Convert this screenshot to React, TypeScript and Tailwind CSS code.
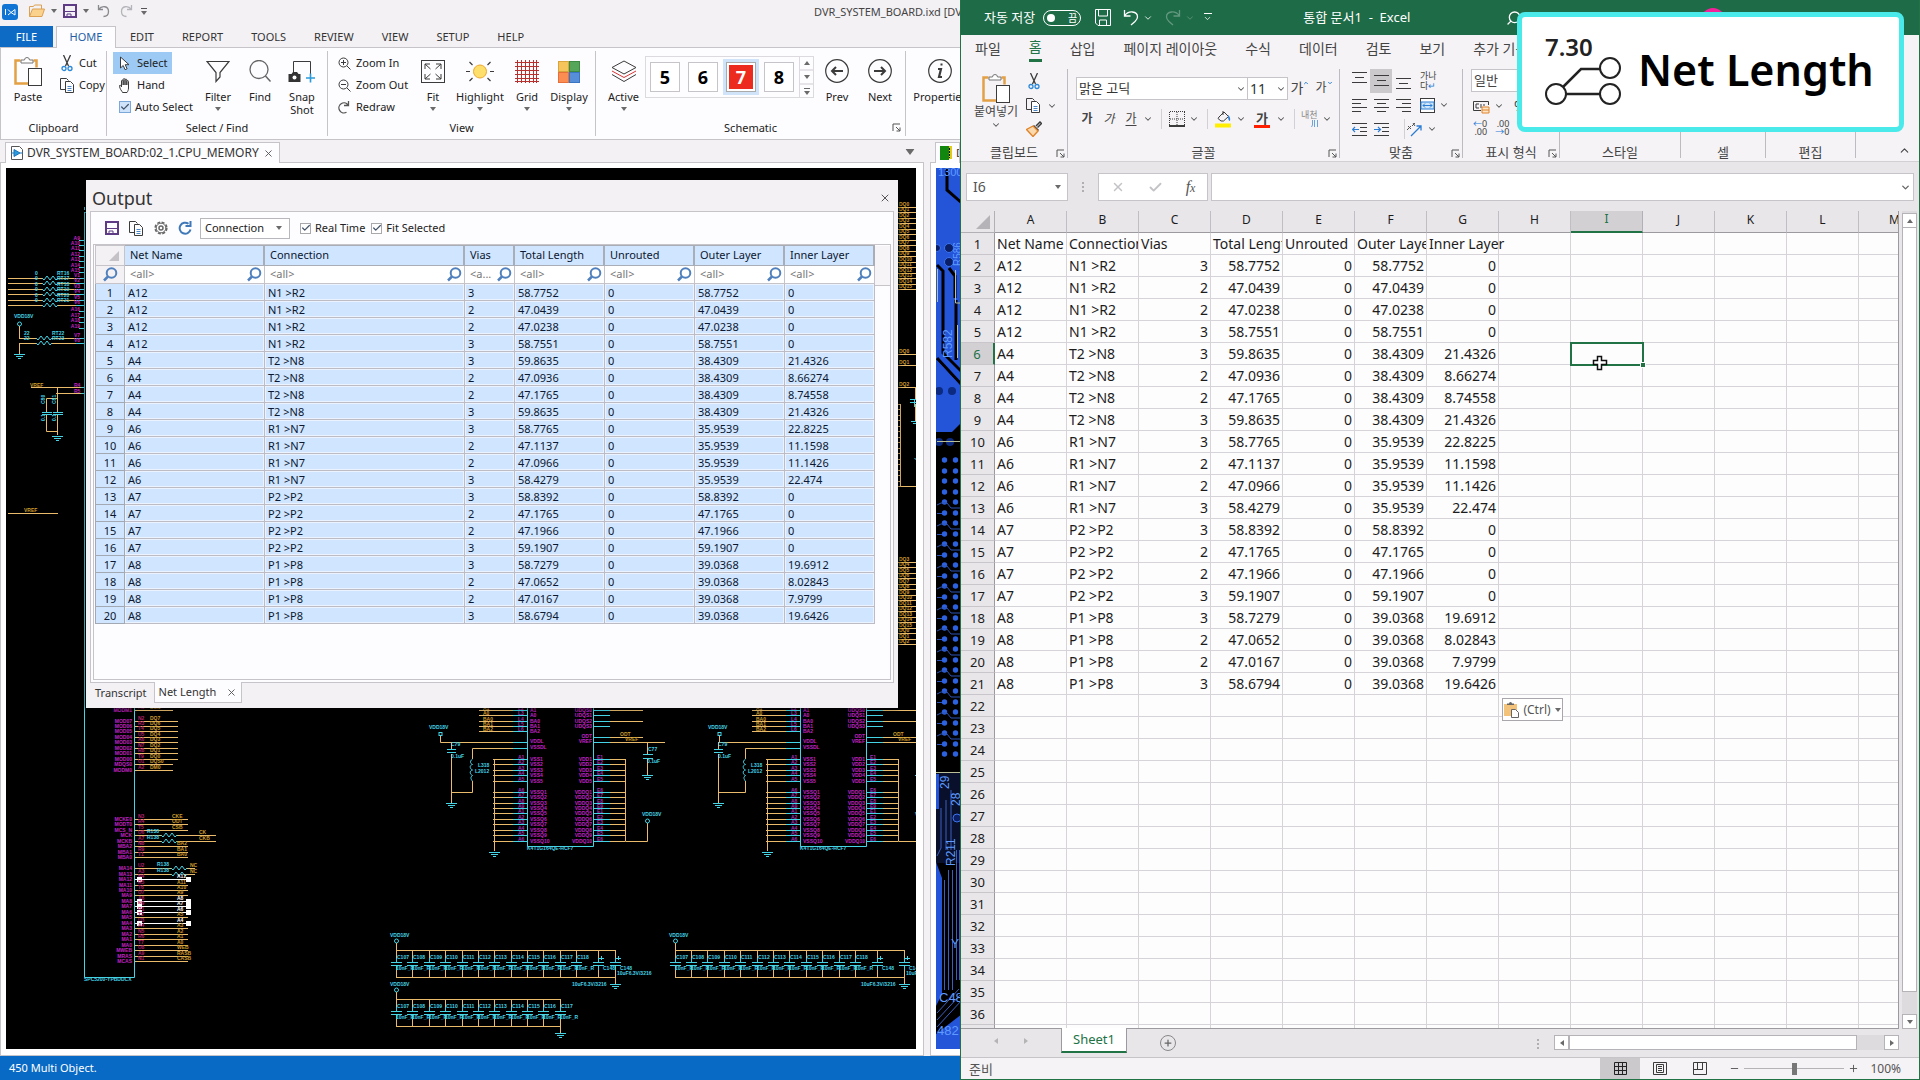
import type { ReactNode } from "react";
import { Check, ChevronDown, ChevronUp, Plus, Minus, Search, X } from "lucide-react";

type Row = [string, string, number, string, string, string, string];

const columns = ["Net Name", "Connection", "Vias", "Total Length", "Unrouted", "Outer Layer", "Inner Layer"];

const rows: Row[] = [
	["A12", "N1 >R2", 3, "58.7752", "0", "58.7752", "0"],
	["A12", "N1 >R2", 2, "47.0439", "0", "47.0439", "0"],
	["A12", "N1 >R2", 2, "47.0238", "0", "47.0238", "0"],
	["A12", "N1 >R2", 3, "58.7551", "0", "58.7551", "0"],
	["A4", "T2 >N8", 3, "59.8635", "0", "38.4309", "21.4326"],
	["A4", "T2 >N8", 2, "47.0936", "0", "38.4309", "8.66274"],
	["A4", "T2 >N8", 2, "47.1765", "0", "38.4309", "8.74558"],
	["A4", "T2 >N8", 3, "59.8635", "0", "38.4309", "21.4326"],
	["A6", "R1 >N7", 3, "58.7765", "0", "35.9539", "22.8225"],
	["A6", "R1 >N7", 2, "47.1137", "0", "35.9539", "11.1598"],
	["A6", "R1 >N7", 2, "47.0966", "0", "35.9539", "11.1426"],
	["A6", "R1 >N7", 3, "58.4279", "0", "35.9539", "22.474"],
	["A7", "P2 >P2", 3, "58.8392", "0", "58.8392", "0"],
	["A7", "P2 >P2", 2, "47.1765", "0", "47.1765", "0"],
	["A7", "P2 >P2", 2, "47.1966", "0", "47.1966", "0"],
	["A7", "P2 >P2", 3, "59.1907", "0", "59.1907", "0"],
	["A8", "P1 >P8", 3, "58.7279", "0", "39.0368", "19.6912"],
	["A8", "P1 >P8", 2, "47.0652", "0", "39.0368", "8.02843"],
	["A8", "P1 >P8", 2, "47.0167", "0", "39.0368", "7.9799"],
	["A8", "P1 >P8", 3, "58.6794", "0", "39.0368", "19.6426"],
];

/* ---------- small shared pieces ---------- */

function Icon({ w, h, className, children }: { w: number; h: number; className?: string; children: ReactNode }) {
	return (
		<svg width={w} height={h} viewBox={`0 0 ${w} ${h}`} fill="none" stroke="#3b3b3b" className={`shrink-0 ${className ?? ""}`} aria-hidden="true">
			{children}
		</svg>
	);
}

const Caret = ({ className = "" }: { className?: string }) => (
	<Icon w={6} h={4} className={className}>
		<path d="M0 0h6L3 4z" fill="#6a6a6a" stroke="none" />
	</Icon>
);

const Launcher = () => (
	<Icon w={9} h={9}>
		<path d="M1 8V1h7M4 4l4 4M8 4.500V8H4.500" stroke="#555" />
	</Icon>
);

function CheckBox({ label, blue }: { label: string; blue?: boolean }) {
	return (
		<label className="flex items-center gap-1 whitespace-nowrap">
			<span className="grid">
				<input
					type="checkbox"
					defaultChecked
					className={
						blue
							? "col-start-1 row-start-1 size-3 appearance-none border border-[#7ba7d9] bg-[#cfe4fb]"
							: "col-start-1 row-start-1 size-[11px] appearance-none border border-[#a9a9ad] bg-white"
					}
				/>
				<Check size={10} strokeWidth={3} className="pointer-events-none col-start-1 row-start-1 place-self-center text-[#44546a]" />
			</span>
			{label}
		</label>
	);
}

/* ---------- icons of the schematic editor ---------- */

const ClipboardIcon = () => (
	<Icon w={28} h={31}>
		<path d="M6.500 4.500h-5v23h13M19.500 4.500h3v7" stroke="#e3a045" strokeWidth="2.500" />
		<path d="M7 7V4h3.500a2.500 2.500 0 0 1 5 0H19v3z" fill="#fff" stroke="#777" />
		<rect x="14.500" y="12.500" width="13" height="17" fill="#fff" />
	</Icon>
);

const CutIcon = () => (
	<Icon w={12} h={17}>
		<path d="M2.500 0l5 11M9.500 0l-5 11" strokeWidth="1.300" />
		<circle cx="3" cy="13.500" r="2" stroke="#2b88d8" strokeWidth="1.300" />
		<circle cx="9" cy="13.500" r="2" stroke="#2b88d8" strokeWidth="1.300" />
	</Icon>
);

const CopyIcon = () => (
	<Icon w={15} h={15}>
		<path d="M5 11.500H.5V.5h6l2 2" />
		<path d="M5.500 3.500h5l3 3v8h-8z" fill="#fff" />
		<path d="M7.500 8.500h4M7.500 10.500h4M7.500 12.500h4" stroke="#4a86c5" />
	</Icon>
);

const SaveIcon = () => (
	<Icon w={14} h={14}>
		<rect x="1" y="1" width="12" height="12" stroke="#5f3b85" strokeWidth="2" />
		<path d="M2 7.500h10M4 12v-2h4v2" stroke="#5f3b85" />
	</Icon>
);

const PointerIcon = () => (
	<Icon w={12} h={15}>
		<path d="M1.500 1v11l2.700-2.500 1.900 4.200 2-.9-1.900-4.100H10z" fill="#fff" />
	</Icon>
);

const HandIcon = () => (
	<Icon w={12} h={15}>
		<path d="M3 13.500C1 11 .5 9 .5 7.500c1-.6 1.500 0 2 1.500V3c0-1.200 1.700-1.200 1.700 0v4V1.500c0-1.200 1.800-1.200 1.800 0V7 2c0-1.200 1.800-1.200 1.800 0v5-3.500c0-1.200 1.700-1.200 1.700 0V10c0 2-.8 3.500-1.500 4.500H3.500z" fill="#fff" />
	</Icon>
);

const FilterIcon = () => (
	<Icon w={24} h={23}>
		<path d="M1 1.500h22l-9 11V17l-4 4.500v-9z" strokeWidth="1.200" />
	</Icon>
);

const FindIcon = () => (
	<Icon w={24} h={23}>
		<circle cx="11" cy="9.500" r="9" stroke="#666" strokeWidth="1.300" />
		<path d="M17.500 16l5 5.500" stroke="#666" strokeWidth="1.500" />
	</Icon>
);

const SnapShotIcon = () => (
	<Icon w={28} h={23}>
		<path d="M5.500 12V1.500h17V14" />
		<path d="M.5 14h3l1.500-2h4l1.500 2h2v8H.5z" fill="#333" stroke="none" />
		<circle cx="6.500" cy="17.500" r="2" fill="#fff" stroke="none" />
		<path d="M18 18h9M22.500 13.500v9" stroke="#2b9bdc" strokeWidth="1.600" />
	</Icon>
);

const ZoomGlass = ({ plus }: { plus?: boolean }) => (
	<Icon w={13} h={13}>
		<circle cx="5.500" cy="5.500" r="4.500" />
		<path d={plus ? "M9 9l3.500 3.500M3 5.500h5M5.500 3v5" : "M9 9l3.500 3.500M3 5.500h5"} />
	</Icon>
);

const RedrawIcon = () => (
	<Icon w={13} h={13}>
		<path d="M8.500 11.200A5 5 0 1 1 10 4M10.500 0v4.500H6" stroke="#555" strokeWidth="1.300" />
	</Icon>
);

const FitIcon = () => (
	<Icon w={24} h={23}>
		<rect x=".5" y=".5" width="23" height="22" />
		<path d="M4 9V4h5M15 4h5v5M20 14v5h-5M9 19H4v-5M4 4l5.500 5M20 4l-5.500 5M20 19l-5.500-5M4 19l5.500-5" />
	</Icon>
);

const HighlightIcon = () => (
	<Icon w={28} h={23}>
		<circle cx="14" cy="11.500" r="6.500" fill="#ffdf6b" stroke="#eda72e" />
		<path d="M0 11.500h4M24 11.500h4M3.500 2l3 3M24.500 2l-3 3M3.500 21l3-3M24.500 21l-3-3" strokeWidth="1.200" />
	</Icon>
);

const GridIcon = () => (
	<Icon w={24} h={23}>
		<path d="M2.500 0v23M6.500 0v23M10.500 0v23M14.500 0v23M18.500 0v23M21.500 0v23M0 2.500h24M0 6.500h24M0 10.500h24M0 14.500h24M0 18.500h24M0 21.500h24" stroke="#b8312f" />
	</Icon>
);

const DisplayIcon = () => (
	<Icon w={22} h={23}>
		<rect x=".5" y="1.500" width="10" height="10" fill="#f5c55c" stroke="#d8a53c" />
		<rect x="11.500" y="1.500" width="10" height="10" fill="#55a55a" stroke="#3d8a43" />
		<rect x=".5" y="12.500" width="10" height="10" fill="#fb8d53" stroke="#e5703a" />
		<rect x="11.500" y="12.500" width="10" height="10" fill="#568fd8" stroke="#3a75c4" />
	</Icon>
);

const LayersIcon = () => (
	<Icon w={26} h={23}>
		<path d="M13 1l12 6.500L13 14 1 7.500z" />
		<path d="M1 11l12 6.500L25 11" stroke="#d33" />
		<path d="M1 14.500L13 21.500l12-7" />
	</Icon>
);

const RoundIcon = ({ children }: { children: ReactNode }) => (
	<Icon w={24} h={24}>
		<circle cx="12" cy="12" r="11.300" strokeWidth="1.200" />
		{children}
	</Icon>
);

/* ---------- schematic editor ribbon ---------- */

function Group({ title, width, launcher, children }: { title: string; width: string; launcher?: boolean; children: ReactNode }) {
	return (
		<section className={`relative my-[3px] flex shrink-0 flex-col border-r border-[#c6c4c8] ${width}`}>
			<div className="flex flex-1 pt-px">{children}</div>
			<h2 className="text-center leading-4">{title}</h2>
			{launcher && (
				<button className="absolute right-1 bottom-1" aria-label={`${title} options`}>
					<Launcher />
				</button>
			)}
		</section>
	);
}

function BigButton({ icon, label, width, caret }: { icon: ReactNode; label: string; width: string; caret?: boolean }) {
	return (
		<button className={`flex shrink-0 flex-col items-center ${width}`}>
			<span className="flex h-[38px] items-center">{icon}</span>
			<span className="leading-[13px]">{label}</span>
			{caret && <Caret className="mt-1" />}
		</button>
	);
}

function SmallButton({ icon, label, active }: { icon: ReactNode; label: string; active?: boolean }) {
	return (
		<button className={`flex h-[22px] items-center gap-1 px-1 ${active ? "bg-[#9ccaf5]" : ""}`}>
			<span className="flex w-4 justify-center">{icon}</span>
			{label}
		</button>
	);
}

function EditorRibbon() {
	return (
		<div className="flex h-[93px] shrink-0 overflow-hidden border-y border-l border-[#c6c4c8] bg-[#fdfcfe] text-[#222]">
			<Group title="Clipboard" width="w-[106px]">
				<BigButton icon={<ClipboardIcon />} label="Paste" width="w-[54px]" />
				<div>
					<SmallButton icon={<CutIcon />} label="Cut" />
					<SmallButton icon={<CopyIcon />} label="Copy" />
				</div>
			</Group>
			<Group title="Select / Find" width="w-[221px]">
				<div className="flex w-[90px] flex-col items-start pl-1.5">
					<SmallButton icon={<PointerIcon />} label="Select" active />
					<SmallButton icon={<HandIcon />} label="Hand" />
					<div className="flex h-[22px] items-center pl-1.5">
						<CheckBox label="Auto Select" blue />
					</div>
				</div>
				<BigButton icon={<FilterIcon />} label="Filter" width="w-[42px]" caret />
				<BigButton icon={<FindIcon />} label="Find" width="w-[42px]" />
				<BigButton icon={<SnapShotIcon />} label="Snap Shot" width="w-[42px]" />
			</Group>
			<Group title="View" width="w-[268px]">
				<div className="flex w-[85px] flex-col items-start pl-1 whitespace-nowrap">
					<SmallButton icon={<ZoomGlass plus />} label="Zoom In" />
					<SmallButton icon={<ZoomGlass />} label="Zoom Out" />
					<SmallButton icon={<RedrawIcon />} label="Redraw" />
				</div>
				<BigButton icon={<FitIcon />} label="Fit" width="w-[40px]" caret />
				<BigButton icon={<HighlightIcon />} label="Highlight" width="w-[54px]" caret />
				<BigButton icon={<GridIcon />} label="Grid" width="w-[40px]" caret />
				<BigButton icon={<DisplayIcon />} label="Display" width="w-[44px]" caret />
			</Group>
			<Group title="Schematic" width="w-[310px]" launcher>
				<BigButton icon={<LayersIcon />} label="Active" width="w-[49px] pl-1.5" caret />
				<div className="mt-1 flex h-[42px] items-center gap-0.5 border border-[#dcdade] pl-px">
					{["5", "6", "7", "8"].map((n) => (
						<button key={n} className={`p-[3px] ${n === "7" ? "bg-[#cfe3f9]" : ""}`}>
							<span
								className={`flex size-[30px] items-center justify-center border text-lg leading-none font-bold ${
									n === "7" ? "border-[#aaa] bg-[#ec2a1e] text-white inset-ring-2 inset-ring-white" : "border-[#c6c4c8] bg-white text-black"
								}`}
							>
								{n}
							</span>
						</button>
					))}
					<div className="flex h-full w-[14px] flex-col border-l border-[#dcdade]">
						<button className="flex flex-1 items-center justify-center" aria-label="Up">
							<Caret className="rotate-180" />
						</button>
						<button className="flex flex-1 items-center justify-center border-y-2 border-[#e6e4e8]" aria-label="Down">
							<Caret />
						</button>
						<button className="flex flex-1 flex-col items-center justify-center gap-0.5" aria-label="More">
							<span className="h-px w-1.5 bg-[#6a6a6a]" />
							<Caret />
						</button>
					</div>
				</div>
				<BigButton
					icon={
						<RoundIcon>
							<path d="M18 12H7M11 8l-4 4 4 4" strokeWidth="2" />
						</RoundIcon>
					}
					label="Prev"
					width="w-[46px]"
				/>
				<BigButton
					icon={
						<RoundIcon>
							<path d="M6 12h11M13 8l4 4-4 4" strokeWidth="2" />
						</RoundIcon>
					}
					label="Next"
					width="w-[40px]"
				/>
			</Group>
			<BigButton
				icon={
					<RoundIcon>
						<path d="M10 10h3l-2 8h3M12.500 5.500h2" strokeWidth="2.200" />
					</RoundIcon>
				}
				label="Properties"
				width="mt-1 w-[68px]"
			/>
		</div>
	);
}

/* ---------- schematic drawing ---------- */

const ORANGE = "#e9bb6b";
const CYAN = "#45d3e6";
const MAGENTA = "#c022c0";
const NET = "#cf9d2c";

function Label({ x, y, c = CYAN, end, children }: { x: number; y: number; c?: string; end?: boolean; children: ReactNode }) {
	return (
		<text x={x} y={y} fill={c} stroke="none" fontSize="5" fontWeight="700" textAnchor={end ? "end" : "start"}>
			{children}
		</text>
	);
}

const Ground = ({ x, y }: { x: number; y: number }) => (
	<path d={`M${x - 5} ${y + 0.5}h11M${x - 3} ${y + 2.5}h7M${x - 1} ${y + 4.5}h3`} stroke={CYAN} />
);

const Zigzag = ({ x, y }: { x: number; y: number }) => <path d={`M${x} ${y}l2 2 3-4 3 4 3-4 3 4 2-2`} stroke={CYAN} />;

const leftPins: [number, number, string, string][] = [
	[710, 173, "MODM1", "DM1"], [721, 178, "MOD07", "DQ7"], [726, 178, "MOD06", "DQ6"], [731, 178, "MOD05", "DQ5"],
	[737, 178, "MOD04", "DQ4"], [742, 178, "MOD03", "DQ3"], [748, 178, "MOD02", "DQ2"], [753, 178, "MOD01", "DQ1"],
	[759, 178, "MOD00", "DQ0"], [764, 173, "MDQS0", "DQS0"], [770, 173, "MODM0", "DM0"], [819, 188, "MCKE0", "CKE"],
	[824, 188, "MODT0", "ODT"], [830, 188, "MCS_N", "CSB"], [835, 216, "MCK", "CK"], [841, 216, "MCKB", "CKB"],
	[846, 188, "MBA2", "BA2"], [852, 188, "MBA1", "BA1"], [857, 188, "MBA0", "BA0"], [868, 195, "MA14", "NC"],
	[874, 195, "MA13", "NC"], [879, 188, "MA12", "A12"], [885, 188, "MA11", "A11"], [890, 188, "MA10", "A10"],
	[895, 188, "MA9", "A9"], [901, 188, "MA8", "A8"], [906, 188, "MA7", "A7"], [912, 188, "MA6", "A6"],
	[917, 188, "MA5", "A5"], [923, 188, "MA4", "A4"], [928, 188, "MA3", "A3"], [934, 188, "MA2", "A2"],
	[939, 188, "MA1", "A1"], [945, 188, "MA0", "A0"], [950, 188, "MWEB", "WEB"], [956, 188, "MRAS", "RASB"],
	[961, 188, "MCAS", "CASB"],
];
const selectedNets = [879, 901, 906, 912, 923];
const resistorPins = [835, 841, 868, 874];
const pinRows = [759, 764, 770, 775, 781, 792, 797, 803, 808, 813, 819, 824, 830, 835, 841];
const addressRows: [number, string][] = [[710, "A1"], [715, "A0"], [721, "BA0"], [726, "BA1"], [731, "BA2"]];

function MemoryChip({ dx, capX, supplyX }: { dx: number; capX: number; supplyX: number }) {
	return (
		<g>
			<g transform={`translate(${dx} 0)`}>
				<path d="M527.500 600V846.500H593.500V600" stroke={CYAN} />
				<Label x={527} y={850}>K4T1G164QE-HCF7</Label>
				{addressRows.map(([y, name], i) => (
					<g key={y}>
						<path d={`M479 ${y + 0.5}h34`} stroke={ORANGE} />
						<path d={`M513 ${y + 0.5}h14`} stroke={CYAN} />
						<Label x={483} y={y}>
							<tspan fill={NET}>{name}</tspan>
						</Label>
						<Label x={518} y={y} c="#a032b8">{`L${i + 2}`}</Label>
						<Label x={530} y={y + 2} c={MAGENTA}>{name}</Label>
						{i < 4 && <Label x={592} y={y + 2} c={MAGENTA} end>{`UDQS${i}`}</Label>}
						{i < 4 && <path d={`M593 ${y + 0.5}h17`} stroke={CYAN} />}
						{i % 2 === 0 && i < 4 && <path d={`M610 ${y + 0.5}h33`} stroke={ORANGE} />}
					</g>
				))}
				<path d="M513 742.500H527M513 748.500H527M593 737.500h17M593 742.500h17" stroke={CYAN} />
				<path d="M472.500 759v-10.500H513M610 737.500h33M610 742.500h55M647.500 742v12M647.500 759v16" stroke={ORANGE} />
				<path d="M472.500 759c-4 3-1 5 0 5.500-4 1-2 5 0 5.500-4 1-2 5 0 5.500-3 2-1 4 0 6M643 754.500h10M643 758.500h10" stroke={CYAN} />
				<Label x={647} y={763}>0.1uF</Label>
				<Label x={648} y={751}>C77</Label>
				<Label x={478} y={767}>L318</Label>
				<Label x={475} y={773}>L2012</Label>
				<Ground x={647} y={775} />
				<Label x={530} y={743} c={MAGENTA}>VDDL</Label>
				<Label x={530} y={749} c={MAGENTA}>VSSDL</Label>
				<Label x={592} y={738} c={MAGENTA} end>ODT</Label>
				<Label x={592} y={743} c={MAGENTA} end>VREF</Label>
				<Label x={620} y={736} c={NET}>ODT</Label>
				<Label x={625} y={741} c={NET}>VREF</Label>
				{pinRows.map((y, i) => (
					<g key={y}>
						<path d={`M493 ${y + 0.5}h20M610 ${y + 0.5}h15`} stroke={ORANGE} />
						<path d={`M513 ${y + 0.5}h14M593 ${y + 0.5}h17`} stroke={CYAN} />
						<Label x={518} y={y} c="#a032b8">{`A${(i % 9) + 1}`}</Label>
						<Label x={597} y={y} c="#a032b8">{`E${(i % 9) + 1}`}</Label>
						<Label x={530} y={y + 2} c={MAGENTA}>{i < 5 ? `VSS${i + 1}` : `VSSQ${i - 4}`}</Label>
						<Label x={592} y={y + 2} c={MAGENTA} end>{i < 5 ? `VDD${i + 1}` : `VDDQ${i - 4}`}</Label>
					</g>
				))}
				<path d="M494.500 759v92M625.500 759v82.500H647.500V823" stroke={ORANGE} />
				<circle cx="647.500" cy="821" r="2" stroke={CYAN} />
				<Label x={642} y={816}>VDD18V</Label>
				<Ground x={494} y={852} />
			</g>
			<Label x={supplyX - 11} y={729}>VDD18V</Label>
			<rect x={supplyX - 1} y={732.500} width="3" height="3" stroke={CYAN} />
			<path d={`M${supplyX + 0.5} 736v6.500H${513 + dx}M${capX + 0.5} 742v7M${capX + 0.5} 754v49M${capX + 0.5} 792.500H${472.5 + dx}V781`} stroke={ORANGE} />
			<path d={`M${capX - 4} 749.500h9M${capX - 4} 752.500h9`} stroke={CYAN} />
			<Label x={capX} y={746}>C79</Label>
			<Label x={capX} y={758}>0.1uF</Label>
			<Ground x={capX} y={803} />
		</g>
	);
}

function CapBank({ xs, top, big }: { xs: number[]; top: number; big?: boolean }) {
	const bottom = top + 27;
	const ground = xs[xs.length - 1];
	return (
		<g>
			<Label x={xs[0] - 6} y={top - 13}>VDD18V</Label>
			<circle cx={xs[0] + 0.5} cy={top - 9} r="2" stroke={CYAN} />
			<path d={`M${xs[0] + 0.5} ${top - 7}v7M${xs[0]} ${top + 0.5}H${ground}M${xs[0]} ${bottom + 0.5}H${ground}M${ground + 0.5} ${bottom}v7`} stroke={ORANGE} />
			{xs.map((x, i) => {
				const tall = big && i > xs.length - 3;
				return (
					<g key={x}>
						<path d={`M${x + 0.5} ${top}v11M${x + 0.5} ${top + 16}v11`} stroke={ORANGE} />
						<path d={`M${x - 5} ${top + 12.5}h11M${x - 5} ${top + 15.5}h11M${x + 0.5} ${top + 8}v4M${x + 0.5} ${top + 16}v4`} stroke={CYAN} />
						{tall ? <path d={`M${x + 3.5} ${top + 6}v4M${x + 1} ${top + 8.5}h5`} stroke={CYAN} /> : <Label x={x + 1} y={top + 9}>{`C${107 + i}`}</Label>}
						<Label x={tall ? x + 5 : x} y={top + 20}>{tall ? "C148" : "10nF_R"}</Label>
					</g>
				);
			})}
			{big && (
				<>
					<Label x={ground - 43} y={bottom + 9}>10uF6.3V/3216</Label>
					<Label x={ground + 2} y={bottom - 2}>10uF6.3V/3216</Label>
				</>
			)}
			<Ground x={ground} y={bottom + 7} />
		</g>
	);
}

const stripLines = [
	...Array.from({ length: 16 }, (_, i) => 207 + Math.round(i * 5.47)),
	354, 365, 387,
	...Array.from({ length: 16 }, (_, i) => 562 + Math.round(i * 5.47)),
];

function Schematic() {
	return (
		<svg className="block h-full w-full bg-black" fontFamily="Liberation Sans, sans-serif" fill="none" aria-label="Schematic sheet">
			<g transform="translate(-6 -168)">
				{/* processor block on the left edge */}
				<path d="M84.500 212V977.500H134.500V600M86.500 212V330M84 212.500h3M84.500 207v3" stroke={CYAN} />
				<Label x={84} y={981}>SPC5200-YPBDDCX</Label>
				{[240, 245, 250, 256, 261, 267, 272, 311, 317, 322, 328].map((y, i) => (
					<g key={y}>
						<path d={`M79 ${y + 0.5}h6`} stroke={CYAN} />
						<Label x={80} y={y} c={MAGENTA} end>{`A${i + 9}`}</Label>
					</g>
				))}
				{[278, 283, 289, 294, 300, 305, 338, 343].map((y, i) => (
					<g key={y}>
						<path d={i < 6 ? `M8 ${y + 0.5}h34M58 ${y + 0.5}h20` : `M19 ${y + 0.5}h17M52 ${y + 0.5}h26`} stroke={ORANGE} />
						<path d={`M76 ${y + 0.5}h9`} stroke={CYAN} />
						<Zigzag x={i < 6 ? 42 : 36} y={y} />
						<Label x={i < 6 ? 35 : 24} y={y - 3}>{i < 6 ? "0" : "22"}</Label>
						<Label x={i < 6 ? 57 : 52} y={y - 3}>{`RT${16 + i}`}</Label>
						<Label x={80} y={y - 1} c={MAGENTA} end>{`V${i + 1}`}</Label>
					</g>
				))}
				<Label x={14} y={318}>VDD18V</Label>
				<circle cx="19.500" cy="324" r="2" stroke={CYAN} />
				<path d="M19.500 326v12M19.500 343v11M31 387.500h50M56 393.500h25M57.500 387v25M57.500 415v20M46.500 412V398.500H57M46.500 415v16.500H57M8 513.500h50" stroke={ORANGE} />
				<path d="M42 412.500h10M42 414.500h10M53 412.500h10M53 414.500h10M81 387.500h4M81 393.500h4" stroke={CYAN} />
				<Label x={30} y={387} c={NET}>VREF</Label>
				<Label x={24} y={512} c={NET}>VREF</Label>
				<Label x={74} y={387} c={MAGENTA}>R4</Label>
				<Label x={74} y={393} c={MAGENTA}>R5</Label>
				<text transform="translate(45 404) rotate(-90)" fontSize="5" fontWeight="700" fill={CYAN}>C80</text>
				<text transform="translate(56 404) rotate(-90)" fontSize="5" fontWeight="700" fill={CYAN}>C81</text>
				<text transform="translate(45 421) rotate(-90)" fontSize="5" fontWeight="700" fill={CYAN}>0.1</text>
				<text transform="translate(56 421) rotate(-90)" fontSize="5" fontWeight="700" fill={CYAN}>0.1</text>
				<Ground x={19} y={354} />
				<Ground x={57} y={436} />

				{leftPins.map(([y, end, pin, net], i) => {
					const picked = selectedNets.includes(y);
					const resistor = resistorPins.includes(y);
					const rx = y < 860 ? 161 : 171;
					return (
						<g key={y}>
							<path d={resistor ? `M135 ${y + 0.5}H${rx}M${rx + 16} ${y + 0.5}H${end}` : `M135 ${y + 0.5}H${end}`} stroke={picked ? "#fff" : ORANGE} />
							{resistor && <Zigzag x={rx} y={y} />}
							{resistor && <Label x={rx - 14} y={y - 2}>R138</Label>}
							<Label x={132} y={y + 2} c={MAGENTA} end>{pin}</Label>
							<Label x={138} y={y - 1} c="#b3206a">{`${"ANRTU"[i % 5]}${(i % 9) + 1}`}</Label>
							<Label x={y < 780 ? 150 : y < 832 ? 172 : end > 200 ? 199 : y > 860 && y < 875 ? 190 : 177} y={y - 1} c={picked ? "#fff" : NET}>{net}</Label>
							{picked && <path d={`M137 ${y - 2}h5v5h-5zM186 ${y - 2}h5v5h-5z`} fill="#fff" />}
						</g>
					);
				})}

				<MemoryChip dx={0} capX={451} supplyX={440} />
				<MemoryChip dx={273} capX={718} supplyX={719} />
				<CapBank xs={[396, 412, 429, 445, 462, 478, 494, 511, 527, 543, 560, 576, 598, 615]} top={950} big />
				<CapBank xs={[396, 412, 429, 445, 462, 478, 494, 511, 527, 543, 560]} top={999} />
				<CapBank xs={[675, 691, 707, 724, 740, 757, 773, 789, 806, 822, 839, 855, 877, 904]} top={950} big />

				{/* nets coming out on the right of the sheet */}
				{stripLines.map((y, i) => (
					<g key={y}>
						<path d={`M898 ${y + 0.5}h18`} stroke={ORANGE} />
						<Label x={899} y={y - 1} c={NET}>{`DQ${i % 16}`}</Label>
					</g>
				))}
				{Array.from({ length: 15 }, (_, i) => (
					<path key={i} d={`M898 ${404.5 + Math.round(i * 5.47)}h2`} stroke={ORANGE} />
				))}
				<path d="M900.500 404v82M898 486.500h19M915.500 387v12M915.500 404v17" stroke={ORANGE} />
				<path d="M910 399.500h8M910 402.500h8M911 421.500h8M913 423.500h5M914.500 399v8M914.500 458l2 2" stroke={CYAN} />
			</g>
		</svg>
	);
}

function BoardLayout() {
	const pads = Array.from({ length: 29 }, (_, i) => 460 + Math.round(i * 10.5));
	return (
		<svg className="block h-full w-full bg-black" fill="none" fontFamily="Liberation Sans, sans-serif" aria-label="Board layout">
			<g transform="translate(-936 -168)">
				<path d="M936 168h30v252l-6 4-8 8h-16z" fill="#2454d8" />
				<path d="M947 168v22l16 14M937 265l6 6v82l22 22M937 358l24 26M949 268l6 8v22M956 300v60" stroke="#000" strokeWidth="3" />
				<path d="M937 361l24 26" stroke="#2454d8" />
				<circle cx="949" cy="248" r="4.500" fill="#0b1f66" stroke="#3c74ee" />
				<circle cx="949" cy="262" r="4.500" fill="#0b1f66" stroke="#3c74ee" />
				<circle cx="937" cy="248" r="3.500" fill="#0b1f66" stroke="#3c74ee" />
				<circle cx="939" cy="391" r="4" fill="#0b2a80" />
				<circle cx="952" cy="391" r="4" fill="#0b2a80" />
				<circle cx="939" cy="442" r="4" fill="#0b2a80" />
				<circle cx="950" cy="442" r="4" fill="#0b2a80" />
				<path d="M937 441.500h26M937.500 269v33M955.500 270v33h6M957.500 325v33" stroke="#b9bf96" />
				<text x="938" y="176" fontSize="11" fill="#5f9bff">1300</text>
				<text transform="translate(952 358) rotate(-90)" fontSize="12" fill="#5f9bff">R582</text>
				<text transform="translate(961 266) rotate(-90)" fontSize="10" fill="#5f9bff">R586</text>
				{pads.map((y, i) => (
					<g key={y}>
						{i > 4 && i % 2 === 1 && <path d={`M937 ${y - 8}l4 -2h6l4 5h10M937 ${y + 0.5}h8`} stroke="#2c53b5" />}
						<circle cx="944.500" cy={y} r="2.700" fill="#2c62e0" />
						<circle cx="955.500" cy={y} r="2.700" fill="#2c62e0" />
					</g>
				))}
				<path d="M936 773h30v90h-30z" fill="#08102c" />
				<path d="M936 772.500h26" stroke="#b9bf96" />
				<path d="M936 774h3v35h-3zM936 862l6 16v116l-6 12zM936 1050v-16l26-20v36z" fill="#2454d8" />
				<path d="M944.500 880v110M948.500 870v120M952.500 870v120M956.500 850v130M959.500 850v130M937 1020l24-26M937 1027l25-27M937 1013l22-24M941 808v40l-4 8M946 800v50M951 790v60" stroke="#3a5fc0" />
				<circle cx="957" cy="818" r="4" fill="#0b1f66" stroke="#3c74ee" />
				<text transform="translate(955 866) rotate(-90)" fontSize="12" fill="#5f9bff">R211</text>
				<text transform="translate(949 789) rotate(-90)" fontSize="12" fill="#5f9bff">29</text>
				<text transform="translate(960 806) rotate(-90)" fontSize="12" fill="#5f9bff">28</text>
				<text x="951" y="948" fontSize="12" fill="#5f9bff">Y</text>
				<text x="939" y="1002" fontSize="13" fill="#5f9bff">C48</text>
				<text x="937" y="1035" fontSize="13" fill="#5f9bff">482</text>
			</g>
		</svg>
	);
}

/* ---------- output window ---------- */

const Glass = () => (
	<Icon w={15} h={15}>
		<circle cx="8.500" cy="6" r="4.800" stroke="#4f80bd" strokeWidth="2" />
		<path d="M5 9.500l-4 4" stroke="#4f80bd" strokeWidth="2.500" />
	</Icon>
);

function OutputWindow() {
	return (
		<section className="absolute top-3 left-20 flex h-[528px] w-[812px] flex-col bg-[#f3f1f4] px-1 shadow-[0_0_4px_#000]">
			<header className="flex h-[31px] shrink-0 items-center justify-between pt-1 pr-[3px] pl-0.5">
				<h2 className="text-lg leading-6 text-[#333]">Output</h2>
				<button aria-label="Close output">
					<X size={12} className="text-[#555]" />
				</button>
			</header>
			<div className="flex min-h-0 flex-1 flex-col border border-[#c6c4c8] bg-[#fdfcfe] px-0.5">
				<div className="flex h-8 shrink-0 items-center pl-3 text-[#222]">
					<button aria-label="Save">
						<SaveIcon />
					</button>
					<button className="ml-2.5" aria-label="Copy">
						<CopyIcon />
					</button>
					<button className="ml-2.5" aria-label="Settings">
						<Icon w={14} h={14}>
							<circle cx="7" cy="7" r="5.800" strokeWidth="1.600" strokeDasharray="3 1.550" stroke="#666" />
							<circle cx="7" cy="7" r="4.800" stroke="#666" />
							<circle cx="7" cy="7" r="2" stroke="#666" strokeWidth="1.500" />
						</Icon>
					</button>
					<button className="ml-2.5" aria-label="Refresh">
						<Icon w={14} h={14}>
							<path d="M12.500 8.500A5.500 5.500 0 1 1 10.500 2.800M12.500 0v5H7.500" stroke="#3f78b8" strokeWidth="2" />
						</Icon>
					</button>
					<label className="ml-2 grid items-center">
						<select aria-label="Report type" className="col-start-1 row-start-1 h-[21px] w-[90px] appearance-none border border-[#b9b7bb] bg-white px-1">
							<option>Connection</option>
						</select>
						<Caret className="pointer-events-none col-start-1 row-start-1 mr-2 justify-self-end" />
					</label>
					<div className="ml-2.5 flex gap-1.5">
						<CheckBox label="Real Time" />
						<CheckBox label="Fit Selected" />
					</div>
				</div>
				<div className="mb-0.5 min-h-0 flex-1 overflow-hidden border border-[#c6c4c8] pl-px">
					<div className="flex">
						<table className="w-[780px] table-fixed border-separate border-spacing-0 text-left text-[#0b1830]">
							<colgroup>
								<col className="w-[30px]" />
								<col className="w-[140px]" />
								<col className="w-[200px]" />
								<col className="w-[50px]" />
								<col className="w-[90px]" />
								<col className="w-[90px]" />
								<col className="w-[90px]" />
								<col className="w-[90px]" />
							</colgroup>
							<thead>
								<tr>
									<th className="h-[21px] border-t border-r border-b border-l border-[#c6c4c8] bg-[#f3f1f4] p-0">
										<Icon w={12} h={12} className="ml-3">
											<path d="M11 1v10H1z" fill="#c4c2c6" stroke="none" />
										</Icon>
									</th>
									{columns.map((c) => (
										<th key={c} className="h-[21px] border-t border-r-2 border-b border-[#a9adb5] bg-[#d0e5ff] p-0 pl-[5px] font-normal">
											{c}
										</th>
									))}
								</tr>
								<tr>
									<td className="h-[18px] border-r border-b border-l border-[#c6c4c8] bg-[#f3f1f4] p-0 pl-[7px]">
										<Glass />
									</td>
									{columns.map((c) => (
										<td key={c} className="h-[18px] border-r border-b border-[#c6c4c8] bg-white p-0">
											<div className="flex items-center justify-between pr-0.5 pl-[5px] text-[#777]">
												{c === "Vias" ? "<a..." : "<all>"}
												<Glass />
											</div>
										</td>
									))}
								</tr>
							</thead>
							<tbody>
								{rows.map((row, i) => (
									<tr key={i}>
										<th className="h-[17px] border-r border-b border-l border-[#a3a9b3] bg-[#d0e5ff] p-0 text-center leading-none font-normal">{i + 1}</th>
										{row.map((value, j) => (
											<td key={j} className="h-[17px] border-r border-b border-[#bdbcc4] bg-[#d0e5ff] p-0 pl-[3px] leading-none inset-ring inset-ring-[#eaf3ff]">
												{value}
											</td>
										))}
									</tr>
								))}
							</tbody>
						</table>
						<div className="mt-px h-10 flex-1 border-b border-[#c6c4c8] bg-[#f6f4f7]" />
					</div>
				</div>
			</div>
			<nav className="flex h-[25px] shrink-0 items-start text-[#333]">
				<button className="h-5 px-[5px]">Transcript</button>
				<button className="-mt-px ml-0.5 flex h-[21px] items-center gap-2.5 border border-t-0 border-[#c6c4c8] bg-[#fdfcfe] px-1">
					Net Length
					<X size={11} className="text-[#555]" />
				</button>
			</nav>
		</section>
	);
}

/* ---------- schematic editor window ---------- */

function EditorWindow() {
	return (
		<div className="flex min-h-0 min-w-0 flex-col bg-[#f3f1f4] font-['Noto_Sans','Noto_Sans_CJK_KR',sans-serif] text-[11px]">
			<header className="flex h-[26px] shrink-0 items-center justify-between">
				<div className="flex items-center pb-1 pl-0.5">
					<Icon w={16} h={16} className="mt-0.5">
						<rect width="16" height="16" rx="3" fill="#0f74d4" stroke="none" />
						<path d="M3.500 5v6M6 5.500l3 3-3 2.500M9 8.500l4-3v5.500l-4-2.500" stroke="#fff" />
					</Icon>
					<button className="ml-2.5" aria-label="Open">
						<Icon w={17} h={14}>
							<path d="M1.500 12.500V2.500h4l1-1.500h7v4" stroke="#dba052" />
							<path d="M1.500 12.500l3-7.500h12l-2.500 7.500z" fill="#fbd28d" stroke="#dba052" />
						</Icon>
					</button>
					<Caret className="ml-1.5" />
					<button className="ml-1.5" aria-label="Save">
						<SaveIcon />
					</button>
					<Caret className="ml-1.5" />
					<button className="ml-2" aria-label="Undo">
						<Icon w={13} h={14}>
							<path d="M1.500 1v4.500H6M1.500 5.500C5 1 11.500 2 11.500 7.500c0 3-2 5-5 5" stroke="#8a8a8e" strokeWidth="1.300" />
						</Icon>
					</button>
					<button className="ml-2.5" aria-label="Redo">
						<Icon w={13} h={14}>
							<path d="M11.500 1v4.500H7M11.500 5.500C8 1 1.500 2 1.500 7.500c0 3 2 5 5 5" stroke="#b5b5b9" strokeWidth="1.300" />
						</Icon>
					</button>
					<span className="ml-2 flex flex-col items-center gap-0.5">
						<span className="h-px w-1.5 bg-[#555]" />
						<Caret />
					</span>
				</div>
				<h1 className="w-[146px] overflow-hidden pb-0.5 whitespace-nowrap text-[#444]">DVR_SYSTEM_BOARD.ixd [DVR]</h1>
			</header>

			<nav className="flex h-[21px] shrink-0 items-stretch text-[#333]">
				<button className="w-[53px] bg-[#0d6bc6] pt-px text-white">FILE</button>
				<button className="relative ml-[3px] -mb-px w-[60px] border border-b-0 border-[#c6c4c8] bg-[#fdfcfe] text-[#1f5fa8]">HOME</button>
				<div className="flex gap-7 pt-px pl-[14px]">
					{["EDIT", "REPORT", "TOOLS", "REVIEW", "VIEW", "SETUP", "HELP"].map((t) => (
						<button key={t}>{t}</button>
					))}
				</div>
			</nav>

			<EditorRibbon />

			<div className="flex min-h-0 flex-1">
				<main className="flex min-w-0 flex-1 flex-col">
					<div className="flex h-[23px] shrink-0 items-end justify-between border-b border-[#c6c4c8] px-[5px]">
						<div className="-mb-px flex h-[21px] items-center gap-1 border border-b-0 border-[#c6c4c8] bg-[#fdfcfe] px-[5px] text-xs text-[#333]">
							<Icon w={12} h={14}>
								<path d="M.5.500h8l3 3v10H.5z" fill="#fff" stroke="#555" />
								<path d="M0 7h3M9 7h3M3 3.500v7L9 7z" fill="#2b9bdc" stroke="#1c72b8" />
							</Icon>
							<span className="whitespace-nowrap">DVR_SYSTEM_BOARD:02_1.CPU_MEMORY</span>
							<button aria-label="Close tab">
								<X size={11} className="text-[#555]" />
							</button>
						</div>
						<Caret className="mr-1.5 mb-2 scale-150" />
					</div>
					<div className="relative min-h-0 flex-1 border-x border-b border-[#c6c4c8] bg-white pt-[5px] pr-[7px] pb-[6px] pl-[5px]">
						<Schematic />
						<div className="absolute top-[5px] left-[5px]">
							<OutputWindow />
						</div>
					</div>
				</main>
				<aside className="ml-1.5 flex w-[30px] shrink-0 flex-col">
					<div className="flex h-[23px] shrink-0 items-end border-b border-[#c6c4c8] pl-[5px]">
						<div className="-mb-px flex h-[21px] w-full items-center gap-1 overflow-hidden border border-b-0 border-[#c6c4c8] bg-[#fdfcfe] pl-1 text-[#333]">
							<Icon w={12} h={14}>
								<rect x="2" width="10" height="13" fill="#e5c81c" stroke="none" />
								<rect width="9" height="14" fill="#12870f" stroke="none" />
								<path d="M9.500 2v10" stroke="#111" strokeDasharray="2 1" />
							</Icon>
							D
						</div>
					</div>
					<div className="min-h-0 flex-1 border-b border-l border-[#c6c4c8] bg-white pt-[5px] pb-[6px] pl-[5px]">
						<BoardLayout />
					</div>
				</aside>
			</div>

			<footer className="flex h-6 shrink-0 items-center bg-[#086ac4] pl-[9px] text-white">450 Multi Object.</footer>
		</div>
	);
}

/* ---------- spreadsheet window ---------- */

const Down = () => <ChevronDown size={10} strokeWidth={2.5} className="shrink-0 text-[#555]" />;

function SheetGroup({ title, width, launcher, children }: { title: string; width: string; launcher?: boolean; children?: ReactNode }) {
	return (
		<section className={`relative flex shrink-0 flex-col border-r border-[#bdbbbf] ${width}`}>
			<div className="relative min-h-0 flex-1">{children}</div>
			<h2 className="text-center text-[13px] leading-3 text-[#444]">{title}</h2>
			{launcher && (
				<button className="absolute right-0.5 bottom-0" aria-label={`${title} 옵션`}>
					<Launcher />
				</button>
			)}
		</section>
	);
}

const alignLines: Record<string, string> = {
	top: "M0 .5h15M3 5.500h9M0 10.500h15",
	left: "M0 .5h15M0 4.500h9M0 8.500h15M0 12.500h9",
	center: "M0 .5h15M3 4.500h9M0 8.500h15M3 12.500h9",
	right: "M0 .5h15M6 4.500h9M0 8.500h15M6 12.500h9",
};

function AlignButton({ kind, active, pad = "" }: { kind: string; active?: boolean; pad?: string }) {
	return (
		<button className={`flex h-6 w-[22px] items-center justify-center ${pad} ${active ? "bg-[#cbc9cc]" : ""}`} aria-label={kind}>
			<Icon w={15} h={13}>
				<path d={alignLines[kind]} />
			</Icon>
		</button>
	);
}

function IndentButton({ right }: { right?: boolean }) {
	return (
		<button className="flex h-6 w-[22px] items-center justify-center" aria-label={right ? "들여쓰기" : "내어쓰기"}>
			<Icon w={15} h={13}>
				<path d="M0 .5h15M8 4.500h7M8 8.500h7M0 12.500h15" />
				<path d={right ? "M0 6.500h6M4 4l2.500 2.500L4 9" : "M7 6.500H1M3 4L.5 6.500 3 9"} stroke="#2b7cd3" strokeWidth="1.200" />
			</Icon>
		</button>
	);
}

function SheetRibbon() {
	return (
		<div className="flex h-[94px] shrink-0 overflow-hidden border-b border-[#d2d0d4] bg-[#f5f3f6] pt-px pb-[3px] text-[#444]">
			<SheetGroup title="클립보드" width="w-[107px]" launcher>
				<div className="flex pt-1 pl-[11px]">
					<button className="flex w-[48px] flex-col items-center text-xs leading-4 whitespace-nowrap">
						<ClipboardIcon />
						<span>붙여넣기</span>
						<Down />
					</button>
					<div className="flex flex-col gap-2 pl-1.5">
						<button className="pl-0.5" aria-label="잘라내기">
							<CutIcon />
						</button>
						<button className="flex items-center gap-1.5" aria-label="복사">
							<CopyIcon />
							<Down />
						</button>
						<button aria-label="서식 복사">
							<Icon w={16} h={16}>
								<path d="M10 5l4-4 1.500 1.500-4 4M7.500 4.500l5 5" strokeWidth="1.500" />
								<path d="M7 5L.5 8.500l6.500 7L12 10z" fill="#fbd9ae" stroke="#e0842a" strokeWidth="1.400" />
							</Icon>
						</button>
					</div>
				</div>
			</SheetGroup>
			<SheetGroup title="글꼴" width="w-[272px]" launcher>
				<div className="flex h-[31px] items-end pl-2">
					<label className="grid items-center">
						<select aria-label="글꼴" className="col-start-1 row-start-1 h-[23px] w-[172px] appearance-none border border-[#c6c4c8] bg-white px-0.5 text-[13px] text-[#333]">
							<option>맑은 고딕</option>
						</select>
						<span className="pointer-events-none col-start-1 row-start-1 justify-self-end pr-0.5">
							<Down />
						</span>
					</label>
					<label className="-ml-px grid items-center">
						<select aria-label="글꼴 크기" className="col-start-1 row-start-1 h-[23px] w-[41px] appearance-none border border-[#c6c4c8] bg-white px-0.5 text-sm leading-5 text-[#333]">
							<option>11</option>
						</select>
						<span className="pointer-events-none col-start-1 row-start-1 justify-self-end pr-0.5">
							<Down />
						</span>
					</label>
					<button className="flex w-[24px] items-start justify-center self-center pt-1.5 text-sm leading-4">
						가
						<ChevronUp size={6} strokeWidth={4} className="text-[#2b7cd3]" />
					</button>
					<button className="flex w-[24px] items-start justify-center self-center pt-1.5 text-xs leading-4">
						가
						<ChevronDown size={6} strokeWidth={4} className="text-[#2b7cd3]" />
					</button>
				</div>
				<div className="mt-2 flex h-[22px] items-center pl-2 text-xs">
					<button className="w-[22px] font-bold">가</button>
					<button className="w-[22px] italic">가</button>
					<button className="w-[22px] underline underline-offset-2">가</button>
					<button className="flex w-3 justify-center" aria-label="밑줄 종류">
						<Down />
					</button>
					<span className="mx-[7px] h-5 w-px bg-[#d2d0d4]" />
					<button className="flex items-center gap-1" aria-label="테두리">
						<Icon w={16} h={16}>
							<path d="M1 .5h15M.5 1v14M15.500 1v14M8 1v14M1 8h14" strokeDasharray="1 1" />
							<path d="M0 15h16" strokeWidth="2" />
						</Icon>
						<Down />
					</button>
					<span className="mr-1.5 ml-2 h-5 w-px bg-[#d2d0d4]" />
					<button className="flex items-center gap-1" aria-label="채우기 색">
						<Icon w={18} h={18}>
							<path d="M5 7l5-5 4.500 4.500-5 4.500H7L4 8.500zM9 1v4" />
							<path d="M14 5c2 2 2.500 3 2 6-1.500-.5-2-2-2-6z" fill="#2b7cd3" stroke="none" />
							<path d="M1 15.500h16" stroke="#ffee00" strokeWidth="4" />
						</Icon>
						<Down />
					</button>
					<button className="ml-2 flex items-center gap-1.5" aria-label="글꼴 색">
						<span className="border-b-[3px] border-[#ff1e00] px-0.5 text-[13px] leading-3.5 font-bold">가</span>
						<Down />
					</button>
					<span className="mr-1.5 ml-2 h-5 w-px bg-[#d2d0d4]" />
					<button className="flex items-center gap-1 text-[9px] leading-3 text-[#888]">
						<span className="flex flex-col items-end leading-2.5">
							내천
							<Icon w={7} h={8}>
								<path d="M1.500 0v5l-1 2M3.500 0v7M6.500 0v7" stroke="#6ba3dd" />
							</Icon>
						</span>
						<Down />
					</button>
				</div>
			</SheetGroup>
			<SheetGroup title="맞춤" width="w-[123px]" launcher>
				<div className="grid grid-cols-[22px_22px_22px_1fr] items-center pl-2">
					<AlignButton kind="top" pad="pb-1.5" />
					<AlignButton kind="top" active />
					<AlignButton kind="top" pad="pt-1.5" />
					<button className="pl-1.5 text-left text-[9px] leading-2.5">
						가나
						<br />다<span className="text-[#2b7cd3]">↵</span>
					</button>
					<AlignButton kind="left" />
					<AlignButton kind="center" />
					<AlignButton kind="right" />
					<button className="flex items-center gap-1 pl-1.5" aria-label="병합하고 가운데 맞춤">
						<Icon w={15} h={15}>
							<rect x=".5" y=".5" width="14" height="14" fill="#fff" />
							<rect x="1" y="4" width="13" height="7" fill="#cfe6fa" stroke="#2b7cd3" />
							<path d="M3 7.500h9M5 5.500l-2 2 2 2M10 5.500l2 2-2 2" stroke="#2b7cd3" />
						</Icon>
						<Down />
					</button>
					<IndentButton />
					<IndentButton right />
					<span className="ml-3 h-5 w-px bg-[#d2d0d4]" />
					<button className="-ml-2 flex items-center gap-1" aria-label="방향">
						<Icon w={17} h={15}>
							<path d="M5 14L15 4M10.500 4H15v4.500" stroke="#2b7cd3" strokeWidth="1.300" />
							<path d="M1 8l4-4M2 4l3 3M6 4l3-3M7 1l2 3" stroke="#555" />
						</Icon>
						<Down />
					</button>
				</div>
			</SheetGroup>
			<SheetGroup title="표시 형식" width="w-[97px]" launcher>
				<div className="flex flex-col gap-1 pl-2">
					<select aria-label="표시 형식" className="h-[23px] w-[84px] appearance-none border border-[#c6c4c8] bg-white px-0.5 text-[13px]">
						<option>일반</option>
					</select>
					<div className="flex items-center gap-1 pl-0.5 text-sm leading-5">
						<Icon w={17} h={15}>
							<path d="M8 11.500H.5v-9h15V6M6 5H3v4h3M8 5v4M11 5V7" />
							<path d="M9 8h7v6H9zM9 11h7" stroke="#e0842a" fill="#fbe4c8" />
						</Icon>
						<Down />
						<span className="pl-1.5">%</span>
					</div>
					<div className="flex gap-2 pl-0.5 text-[9px] leading-2">
						<button className="text-right">
							<span className="text-[#2b7cd3]">←</span>0<br />.00
						</button>
						<button className="text-right">
							.00
							<br />
							<span className="text-[#2b7cd3]">→</span>0
						</button>
					</div>
				</div>
			</SheetGroup>
			<SheetGroup title="스타일" width="w-[121px]" />
			<SheetGroup title="셀" width="w-[85px]" />
			<SheetGroup title="편집" width="w-[90px]" />
			<button className="ml-auto self-end pr-2 pb-px" aria-label="리본 접기">
				<ChevronUp size={13} className="text-[#444]" />
			</button>
		</div>
	);
}

const letters = ["A", "B", "C", "D", "E", "F", "G", "H", "I", "J", "K", "L", "M"];
const sheetRows: (string | number)[][] = [columns, ...rows];

function cellStyle(row: number, col: number) {
	if (row === 5 && col === 8)
		return "relative outline-2 -outline-offset-1 outline-[#217346] after:absolute after:-right-1 after:-bottom-1 after:size-1.5 after:border after:border-white after:bg-[#217346]";
	if (row === 0) return col === 6 ? "overflow-visible text-left" : "overflow-hidden text-left";
	return col > 1 ? "overflow-hidden text-right" : "overflow-hidden text-left";
}

function Spreadsheet() {
	return (
		<div className="relative min-w-0 flex-1 overflow-hidden border-r border-b border-[#9c9a9e] bg-[#fefdfe]">
			<table className="w-[970px] table-fixed border-separate border-spacing-0 text-sm leading-5 text-[#1c1c1c]">
				<colgroup>
					<col className="w-[34px]" />
					{letters.map((l) => (
						<col key={l} className="w-[72px]" />
					))}
				</colgroup>
				<thead>
					<tr>
						<th className="h-[22px] border-r border-b border-[#b2b0b4] bg-[#e8e6e9] p-0">
							<Icon w={14} h={14} className="mr-1 ml-auto">
								<path d="M14 0v14H0z" fill="#b5b3b7" stroke="none" />
							</Icon>
						</th>
						{letters.map((l) => (
							<th
								key={l}
								className={`h-[22px] p-0 pb-1 text-xs leading-4 font-normal ${
									l === "I" ? "border-r border-b-2 border-r-[#b2b0b4] border-b-[#217346] bg-[#d2d0d3] text-[#217346]" : "border-r border-b border-r-[#c0bec2] border-b-[#9c9a9e] bg-[#e8e6e9]"
								}`}
							>
								{l}
							</th>
						))}
					</tr>
				</thead>
				<tbody>
					{Array.from({ length: 37 }, (_, r) => (
						<tr key={r}>
							<th
								className={`h-[22px] border-b border-b-[#c8c6ca] p-0 text-[13px] leading-5 font-normal ${
									r === 5 ? "border-r-2 border-r-[#217346] bg-[#d2d0d3] text-[#217346]" : "border-r border-r-[#9c9a9e] bg-[#e8e6e9]"
								}`}
							>
								{r < 36 ? r + 1 : ""}
							</th>
							{letters.map((l, c) => (
								<td key={l} className={`h-[22px] border-r border-b border-[#d6d4d8] p-0 px-0.5 whitespace-nowrap ${cellStyle(r, c)}`}>
									{sheetRows[r]?.[c]}
								</td>
							))}
						</tr>
					))}
				</tbody>
			</table>
			<button className="absolute top-[487px] left-[541px] flex h-[23px] w-[61px] items-center justify-center gap-1 border border-[#a9a7ab] bg-white text-xs text-[#555]">
				<Icon w={15} h={16}>
					<path d="M0 2h13v12H0z" fill="#f3c27b" stroke="none" />
					<path d="M3 3V1.500h2a1.500 1.500 0 0 1 3 0h2V3z" fill="#666" stroke="none" />
					<path d="M7.500 7.500h4l3 3v5h-7z" fill="#fff" stroke="#666" />
				</Icon>
				(Ctrl)
				<Caret />
			</button>
			<Icon w={16} h={16} className="absolute top-[144px] left-[631px]">
				<path d="M5.500 1.500h4v4h5v4h-5v5h-4v-5h-4v-4h4z" fill="#fff" stroke="#111" strokeWidth="1.500" />
			</Icon>
		</div>
	);
}

function ScrollArrow({ turn, label }: { turn: string; label: string }) {
	return (
		<button className="flex size-[15px] shrink-0 items-center justify-center border border-[#b5b3b7] bg-white" aria-label={label}>
			<Caret className={turn} />
		</button>
	);
}

function SheetWindow() {
	return (
		<div className="flex min-h-0 min-w-0 flex-col border-x border-b border-[#217346] bg-[#e8e6e9] font-['Noto_Sans','Noto_Sans_CJK_KR',sans-serif]">
			<header className="flex h-[35px] shrink-0 items-center bg-[#1e6b47] text-[13px] text-white">
				<label className="flex items-center gap-2 pl-[23px]">
					자동 저장
					<span className="grid items-center">
						<input type="checkbox" className="col-start-1 row-start-1 h-4 w-[38px] appearance-none rounded-full border border-white" />
						<span className="pointer-events-none col-start-1 row-start-1 flex items-center justify-between px-1 text-[10px] leading-3">
							<span className="size-2 rounded-full bg-white" />끔
						</span>
					</span>
				</label>
				<button className="ml-3.5" aria-label="저장">
					<Icon w={16} h={17} className="stroke-white">
						<path d="M.5.500h15v16H3l-2.500-2.500zM3.500 1v6h9V1M4.500 16v-5h7v5" />
					</Icon>
				</button>
				<button className="ml-3 flex items-center gap-1" aria-label="실행 취소">
					<Icon w={16} h={17} className="stroke-white">
						<path d="M1.500 1v6h6M1.500 7c4-6 13-5 13 1 0 2-1 3-2.500 4.500L8 16" strokeWidth="1.300" />
					</Icon>
					<ChevronDown size={10} />
				</button>
				<button className="ml-3 flex items-center gap-1 opacity-30" aria-label="다시 실행">
					<Icon w={16} h={17} className="stroke-white">
						<path d="M14.500 1v6h-6M14.500 7c-4-6-13-5-13 1 0 2 1 3 2.500 4.500L8 16" strokeWidth="1.300" />
					</Icon>
					<ChevronDown size={10} />
				</button>
				<button className="ml-2 flex flex-col items-center" aria-label="도구 모음 사용자 지정">
					<span className="h-px w-2 bg-white" />
					<ChevronDown size={9} />
				</button>
				<h1 className="ml-[91px] whitespace-pre">통합 문서1  -  Excel</h1>
				<Search size={16} className="ml-24 -scale-x-100" />
				<span className="mt-1 ml-[179px] size-6 rounded-full bg-[#f5219b]" />
			</header>

			<nav className="flex h-[33px] shrink-0 items-center gap-7 bg-[#f5f3f6] pl-[14px] text-sm text-[#444]">
				{["파일", "홈", "삽입", "페이지 레이아웃", "수식", "데이터", "검토", "보기", "추가 기능"].map((t) => (
					<button key={t} className={`h-[27px] self-start pt-1 pb-1 leading-4 whitespace-nowrap ${t === "홈" ? "border-b-3 border-[#217346] text-[#217346]" : ""}`}>
						{t}
					</button>
				))}
			</nav>

			<SheetRibbon />

			<div className="flex h-[49px] shrink-0 items-center pt-px pr-[5px] pl-[5px]">
				<div className="flex h-7 w-[102px] items-center justify-between border border-[#c6c4c8] bg-white pr-1.5 pl-1.5">
					<input aria-label="이름 상자" defaultValue="I6" className="w-16 text-sm text-[#555] outline-none" />
					<Caret />
				</div>
				<span className="mx-[14px] h-2.5 border-l-2 border-dotted border-[#b0aeb2]" />
				<div className="flex h-7 w-[110px] items-center justify-around border border-[#c6c4c8] bg-white text-[#c4c2c6]">
					<button aria-label="취소">
						<X size={14} strokeWidth={2.5} />
					</button>
					<button aria-label="입력">
						<Check size={15} strokeWidth={3} />
					</button>
					<button className="font-['Liberation_Serif',serif] text-base leading-5 text-[#555] italic">
						f<span className="text-xs">x</span>
					</button>
				</div>
				<div className="ml-[3px] flex h-7 min-w-0 flex-1 items-center border border-[#c6c4c8] bg-white pr-0.5">
					<input aria-label="수식 입력줄" className="min-w-0 flex-1 px-1 text-sm outline-none" />
					<ChevronDown size={11} strokeWidth={3} className="text-[#666]" />
				</div>
			</div>

			<div className="flex min-h-0 flex-1">
				<Spreadsheet />
				<div className="mr-0.5 ml-[3px] flex w-[15px] flex-col bg-[#dddbde] pt-0.5">
					<ScrollArrow turn="rotate-180" label="위로" />
					<div className="mb-[22px] flex-1 border border-t-0 border-[#b5b3b7] bg-white" />
					<ScrollArrow turn="" label="아래로" />
				</div>
			</div>

			<div className="flex h-7 shrink-0 items-start">
				<div className="flex w-[100px] justify-center gap-6 pt-2.5">
					<Caret className="rotate-90 opacity-40" />
					<Caret className="-rotate-90 opacity-40" />
				</div>
				<button className="relative -mt-px h-[25px] w-[66px] border-x border-b-2 border-x-[#9c9a9e] border-b-[#217346] bg-white text-[13px] text-[#217346]">Sheet1</button>
				<button className="mt-1.5 ml-[33px] flex size-4 items-center justify-center rounded-full border border-[#888]" aria-label="새 시트">
					<Plus size={10} strokeWidth={3} className="text-[#666]" />
				</button>
				<span className="mt-2.5 ml-auto h-2.5 border-l-2 border-dotted border-[#b0aeb2]" />
				<div className="mt-1.5 mr-5 ml-[15px] flex w-[345px] bg-[#dddbde]">
					<ScrollArrow turn="rotate-90" label="왼쪽으로" />
					<div className="mr-[27px] flex-1 border border-[#b5b3b7] bg-white" />
					<ScrollArrow turn="-rotate-90" label="오른쪽으로" />
				</div>
			</div>

			<footer className="flex h-[22px] shrink-0 items-center border-t border-[#c6c4c8] bg-[#f5f3f6] pl-2 text-[13px] leading-4 text-[#555]">
				<span>준비</span>
				<div className="ml-auto flex h-full items-center">
					<button className="flex h-full w-10 items-center justify-center bg-[#cbc9cc]" aria-label="기본">
						<Icon w={13} h={13}>
							<path d="M.5.500h12v12H.5zM4.500 0v13M8.500 0v13M0 4.500h13M0 8.500h13" stroke="#222" />
						</Icon>
					</button>
					<button className="flex h-full w-10 items-center justify-center" aria-label="페이지 레이아웃">
						<Icon w={14} h={13}>
							<path d="M.5.500h13v12H.5zM3.500 2.500h7v8h-7zM5 4.500h4M5 6.500h4M5 8.500h4" />
						</Icon>
					</button>
					<button className="flex h-full w-10 items-center justify-center" aria-label="페이지 나누기">
						<Icon w={14} h={13}>
							<path d="M.5.500h13v12H.5zM4.500 0v7M9.500 0v7M0 7.500h10" />
						</Icon>
					</button>
					<button className="ml-1 w-5" aria-label="축소">
						<Minus size={11} className="mx-auto" />
					</button>
					<input
						type="range"
						aria-label="확대/축소"
						className="h-3 w-[100px] appearance-none bg-[linear-gradient(#b5b3b7,#b5b3b7)] bg-[length:100%_1px] bg-center bg-no-repeat [&::-webkit-slider-thumb]:h-3 [&::-webkit-slider-thumb]:w-[5px] [&::-webkit-slider-thumb]:appearance-none [&::-webkit-slider-thumb]:bg-[#777]"
					/>
					<button className="w-[19px]" aria-label="확대">
						<Plus size={11} className="mx-auto" />
					</button>
					<span className="w-[56px] pr-[18px] text-right text-xs">100%</span>
				</div>
			</footer>
		</div>
	);
}

/* ---------- feature badge over both windows ---------- */

function FeatureBadge() {
	return (
		<div className="absolute top-3 right-4 flex h-[120px] w-[387px] items-center rounded-lg border-5 border-[#4aeaea] bg-white pl-[22px] font-['Noto_Sans',sans-serif] text-black">
			<svg width="78" height="72" viewBox="0 0 78 72" fill="none" stroke="#222" strokeWidth="2" fontFamily="Noto Sans, sans-serif">
				<text x="1" y="20" fontSize="24" fontWeight="600" fill="#222" stroke="none">7.30</text>
				<path d="M19 51l18-18h19M22 58h34" strokeWidth="2.500" />
				<circle cx="12" cy="58" r="10" />
				<circle cx="66" cy="32" r="10" />
				<circle cx="66" cy="58" r="10" />
			</svg>
			<span className="pb-1.5 pl-4 text-[43px] leading-none font-semibold whitespace-nowrap">Net Length</span>
		</div>
	);
}

export default function App() {
	return (
		<div className="relative grid h-screen grid-cols-2 grid-rows-1 overflow-hidden">
			<EditorWindow />
			<SheetWindow />
			<FeatureBadge />
		</div>
	);
}
